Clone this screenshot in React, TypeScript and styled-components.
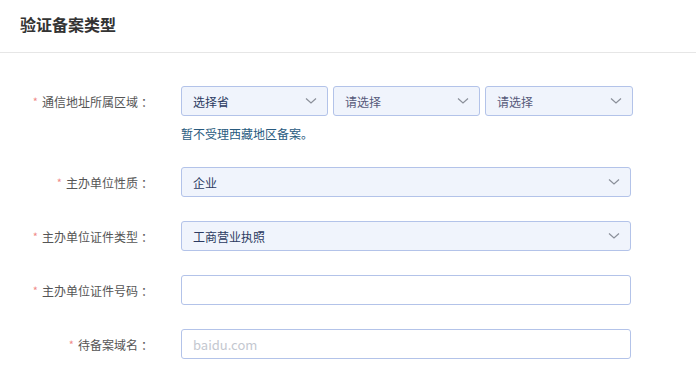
import styled, { createGlobalStyle } from "styled-components";

const GlobalStyle = createGlobalStyle`
  html, body {
    margin: 0;
    padding: 0;
    background: #fff;
    font-family: "Noto Sans CJK SC", "Noto Sans", "Liberation Sans", sans-serif;
  }
`;

const Page = styled.div`
  width: 696px;
  height: 384px;
  overflow: hidden;
  background: #fff;
`;

const Header = styled.div`
  height: 53px;
  border-bottom: 1px solid #e6e6e6;
  display: flex;
  align-items: center;
  padding-left: 20px;
  box-sizing: border-box;
`;

const Title = styled.h2`
  margin: 0;
  margin-top: -5px;
  font-size: 16px;
  font-weight: 700;
  color: #333;
`;

const Form = styled.div`
  padding-top: 33px;
  display: flex;
  flex-direction: column;
  gap: 24px;
`;

const Row = styled.div`
  display: flex;
  align-items: flex-start;
`;

const Label = styled.label`
  width: 153px;
  margin-right: 28px;
  height: 30px;
  line-height: 30px;
  text-align: right;
  font-size: 12px;
  color: #555;
  flex-shrink: 0;
  white-space: nowrap;
`;

const Star = styled.span`
  color: #f08a8a;
  margin-right: 4px;
  font-size: 11px;
  vertical-align: 1px;
`;

const Colon = styled.span`
  display: inline-block;
  width: 12px;
  margin-left: 3px;
  text-align: left;
`;

const Field = styled.div`
  width: 450px;
  display: flex;
  flex-direction: column;
`;

const SelectGroup = styled.div`
  display: grid;
  grid-template-columns: 147px 147px 148px;
  gap: 5px;
`;

const Box = styled.div<{ $filled?: boolean }>`
  height: 30px;
  box-sizing: border-box;
  border: 1px solid #b3c3e9;
  border-radius: 3px;
  background: ${(p) => (p.$filled ? "#f0f4fc" : "#fff")};
  display: flex;
  align-items: center;
  justify-content: space-between;
  padding: 0 10px 0 11px;
`;

const Value = styled.span<{ $muted?: boolean }>`
  font-size: 12px;
  color: ${(p) => (p.$muted ? "#56597a" : "#2c3b62")};
`;

const Placeholder = styled.span`
  font-size: 13px;
  color: #c4c8d0;
`;

const Hint = styled.div`
  margin-top: 9px;
  font-size: 12px;
  line-height: 18px;
  color: #285a7e;
`;

function Chevron() {
  return (
    <svg width="12" height="8" viewBox="0 0 12 8">
      <polyline points="1,1.5 6,6 11,1.5" fill="none" stroke="#8a8f99" strokeWidth="1.2" />
    </svg>
  );
}

function Select({ value, muted }: { value: string; muted?: boolean }) {
  return (
    <Box $filled>
      <Value $muted={muted}>{value}</Value>
      <Chevron />
    </Box>
  );
}

function FieldLabel({ text }: { text: string }) {
  return (
    <Label>
      <Star>*</Star>
      {text}
      <Colon>：</Colon>
    </Label>
  );
}

export default function App() {
  return (
    <Page>
      <GlobalStyle />
      <Header>
        <Title>验证备案类型</Title>
      </Header>
      <Form>
        <Row>
          <FieldLabel text="通信地址所属区域" />
          <Field>
            <SelectGroup>
              <Select value="选择省" />
              <Select value="请选择" muted />
              <Select value="请选择" muted />
            </SelectGroup>
            <Hint>暂不受理西藏地区备案。</Hint>
          </Field>
        </Row>
        <Row>
          <FieldLabel text="主办单位性质" />
          <Field>
            <Select value="企业" />
          </Field>
        </Row>
        <Row>
          <FieldLabel text="主办单位证件类型" />
          <Field>
            <Select value="工商营业执照" />
          </Field>
        </Row>
        <Row>
          <FieldLabel text="主办单位证件号码" />
          <Field>
            <Box />
          </Field>
        </Row>
        <Row>
          <FieldLabel text="待备案域名" />
          <Field>
            <Box>
              <Placeholder>baidu.com</Placeholder>
            </Box>
          </Field>
        </Row>
      </Form>
    </Page>
  );
}
